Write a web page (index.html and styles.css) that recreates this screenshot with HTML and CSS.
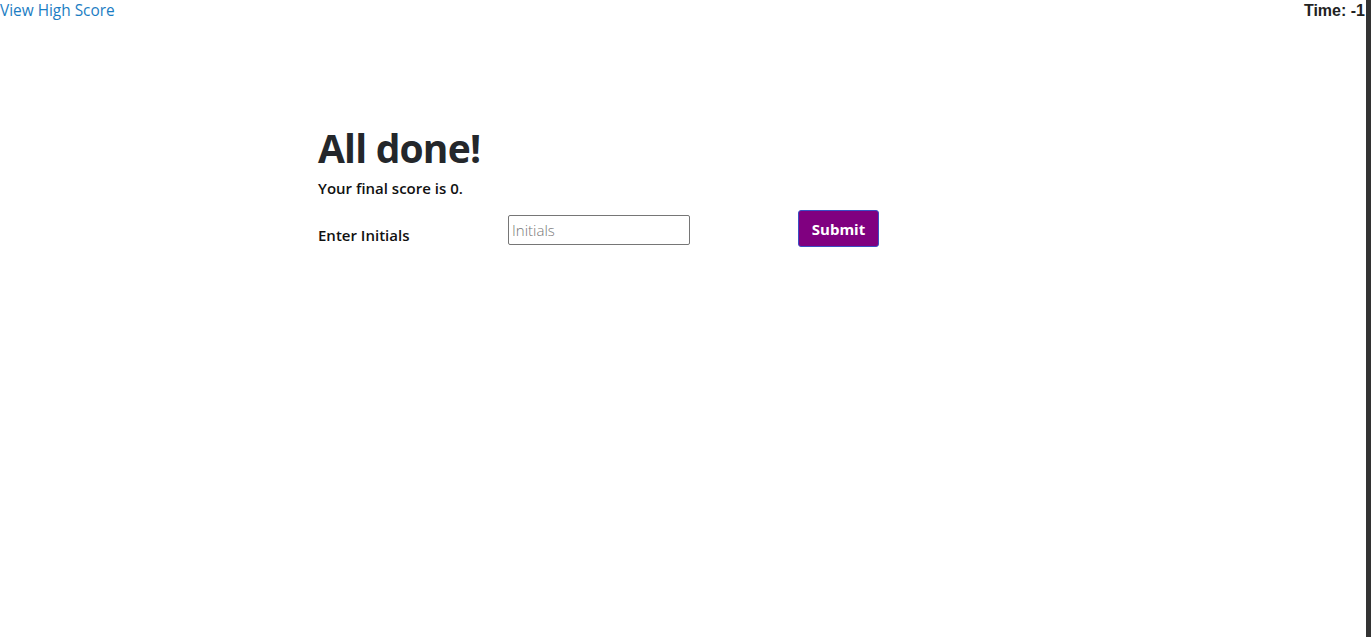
FILE: index.html
```html
<!DOCTYPE html>
<html lang="en">
<head>
<meta charset="utf-8">
<title>Quiz</title>
<link rel="stylesheet" href="styles.css">
</head>
<body>
<div class="page">
  <div class="main">
    <header class="topbar">
      <a class="highscore" href="#">View High Score</a>
      <span class="timer">Time: -1</span>
    </header>
    <section class="done">
      <h1 class="title">All done!</h1>
      <p class="score">Your final score is 0.</p>
      <form class="initials-form">
        <label class="label" for="initials">Enter Initials</label>
        <input class="input" id="initials" type="text" placeholder="Initials">
        <button class="submit" type="button">Submit</button>
      </form>
    </section>
  </div>
  <div class="edge"></div>
</div>
</body>
</html>
```
FILE: styles.css
```css
html, body {
  margin: 0;
  padding: 0;
  height: 100%;
  background: #fff;
}
body {
  font-family: "Open Sans", "Noto Sans", sans-serif;
  color: #212529;
}
.page {
  display: flex;
  height: 100%;
}
.main {
  flex: 1;
  display: flex;
  flex-direction: column;
}
.edge {
  width: 5px;
  background: #333;
}
.topbar {
  display: flex;
  justify-content: space-between;
  align-items: flex-start;
  height: 22px;
}
.highscore {
  color: #1b7dc3;
  text-decoration: none;
  font-size: 15.4px;
  line-height: 21px;
}
.timer {
  font-family: "Liberation Sans", Arial, sans-serif;
  font-weight: bold;
  font-size: 16px;
  line-height: 22px;
  color: #222;
  padding-right: 1px;
}
.done {
  width: 730px;
  margin: 102px auto 0;
}
.title {
  margin: 0;
  font-size: 39px;
  font-weight: 700;
  line-height: 48px;
  letter-spacing: -0.8px;
  color: #24272b;
}
.score {
  margin: 6px 0 0;
  font-size: 15px;
  font-weight: 600;
  line-height: 20px;
  color: #111;
}
.initials-form {
  display: grid;
  grid-template-columns: 190px 290px auto;
  align-items: center;
  margin-top: 12px;
}
.label {
  font-size: 15px;
  font-weight: 600;
  color: #111;
  padding-top: 13px;
}
.input {
  width: 182px;
  height: 30px;
  box-sizing: border-box;
  border: 1px solid #767676;
  border-radius: 2px;
  padding: 1px 3px;
  font-family: "Open Sans", sans-serif;
  font-weight: 300;
  font-size: 15px;
  margin-top: 3px;
}
.input::placeholder {
  color: #777;
}
.submit {
  justify-self: start;
  width: 81px;
  height: 37px;
  box-sizing: border-box;
  background: #800080;
  color: #fff;
  border: 1px solid #3a4fc4;
  border-radius: 3px;
  font-family: "Open Sans", sans-serif;
  font-weight: 700;
  font-size: 15px;
}
```
